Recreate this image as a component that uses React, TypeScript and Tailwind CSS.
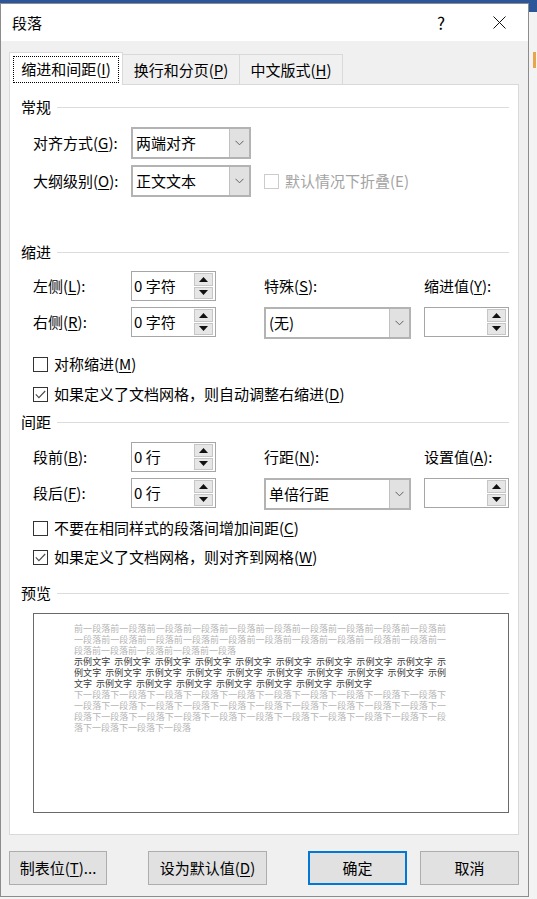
import React from "react"

function U({ children }: { children: React.ReactNode }) {
  return <span className="underline underline-offset-[2px] decoration-[1px]">{children}</span>
}

function SectionHead({ title }: { title: string }) {
  return (
    <div className="flex h-[20px] items-center">
      <span className="leading-[20px]">{title}</span>
      <div className="ml-[6px] h-px flex-1 bg-[#dcdcdc]" />
    </div>
  )
}

function Chevron() {
  return (
    <svg width="9" height="6" viewBox="0 0 9 6">
      <polyline points="0.5,0.8 4.5,4.8 8.5,0.8" fill="none" stroke="#606060" strokeWidth="1" />
    </svg>
  )
}

function Combo({ value, w }: { value: string; w: string }) {
  return (
    <div className={`flex h-[32px] ${w} border-2 border-[#b3b3b3] bg-white`}>
      <div className="flex flex-1 items-center pl-[3px] leading-[20px]">{value}</div>
      <div className="flex w-[20px] items-center justify-center border-l border-[#c0c0c0] bg-[#e1e1e1]">
        <Chevron />
      </div>
    </div>
  )
}

function Arrow({ up }: { up?: boolean }) {
  return (
    <svg width="9" height="5" viewBox="0 0 9 5">
      <polygon points={up ? "0,5 4.5,0 9,5" : "0,0 4.5,5 9,0"} fill="#111" />
    </svg>
  )
}

function Spin({ value }: { value: string }) {
  return (
    <div className="flex h-[30px] w-[85px] border border-[#a6a6a6] bg-white">
      <div className="flex flex-1 items-center pl-[2px] leading-[20px]">{value}</div>
      <div className="flex w-[21px] flex-col gap-px py-[1px] pr-[2px]">
        <div className="flex flex-1 items-center justify-center border border-[#c6c6c6] bg-[#e6e6e6]">
          <Arrow up />
        </div>
        <div className="flex flex-1 items-center justify-center border border-[#c6c6c6] bg-[#e6e6e6]">
          <Arrow />
        </div>
      </div>
    </div>
  )
}

function Check({ checked, disabled, children }: { checked?: boolean; disabled?: boolean; children: React.ReactNode }) {
  return (
    <div className="flex h-[20px] items-center">
      <div
        className={`flex h-[15px] w-[15px] items-center justify-center border bg-white ${
          disabled ? "border-[#cccccc]" : "border-[#333333]"
        }`}
      >
        {checked && (
          <svg width="11" height="9" viewBox="0 0 11 9">
            <polyline points="0.8,4.4 3.9,7.6 10.2,1" fill="none" stroke="#4a4a4a" strokeWidth="1.1" />
          </svg>
        )}
      </div>
      <span className={`ml-[6px] leading-[20px] ${disabled ? "text-[#a3a3a3]" : ""}`}>{children}</span>
    </div>
  )
}

function Label({ children }: { children: React.ReactNode }) {
  return <div className="flex w-[98px] items-center leading-[20px]">{children}</div>
}

function Btn({ children, primary, w }: { children: React.ReactNode; primary?: boolean; w: string }) {
  return (
    <div
      className={`flex h-[34px] ${w} items-center justify-center bg-[#e1e1e1] leading-[20px] ${
        primary ? "border-2 border-[#0078d7]" : "border border-[#adadad]"
      }`}
    >
      {children}
    </div>
  )
}

const before = ["前一段落".repeat(10) + "前", "一段落前".repeat(10) + "一", "段落前一".repeat(4) + "段落"]
const sample = ["示例文字 ".repeat(9) + "示", "例文字" + " 示例文字".repeat(8) + " 示例", "文字" + " 示例文字".repeat(7)]
const after = [
  "下一段落".repeat(10) + "下",
  "一段落下".repeat(10) + "一",
  "段落下一".repeat(10) + "段",
  "落下一段".repeat(3) + "落",
]

function PreviewLine({ text, full, dark }: { text: string; full?: boolean; dark?: boolean }) {
  return (
    <div
      className={`h-[11px] w-[372px] whitespace-pre leading-[11px] ${dark ? "text-[#3a3a3a] [word-spacing:2px]" : "text-[#b5b5b5]"} ${
        full ? "text-justify [text-align-last:justify]" : ""
      }`}
    >
      {text}
    </div>
  )
}

export default function App() {
  return (
    <div className="flex h-[899px] w-[537px] flex-col overflow-hidden bg-[#f3f3f3] font-['Noto_Sans_CJK_SC','Noto_Sans',sans-serif] text-[15px] text-black">
      <div className="h-[3px] w-full shrink-0 bg-[#2b579a]" />
      <div className="flex flex-1">
        {/* 对话框 */}
        <div className="flex h-[894px] w-[529px] shrink-0 flex-col border border-[#8c8c8c] bg-[#f0f0f0]">
          <div className="flex h-[37px] items-center bg-white pl-[11px]">
            <span className="leading-[20px]">段落</span>
            <div className="ml-auto flex pr-[6px]">
              <div className="flex w-[46px] justify-center text-[17px] leading-[20px]">?</div>
              <div className="ml-[12px] flex w-[46px] items-center justify-center">
                <svg width="13" height="13" viewBox="0 0 13 13">
                  <path d="M0.5 0.5 L12.5 12.5 M12.5 0.5 L0.5 12.5" stroke="#111" strokeWidth="1" />
                </svg>
              </div>
            </div>
          </div>

          <div className="flex flex-col pl-[8px] pr-[9px]">
            {/* 选项卡 */}
            <div className="mt-[11px] flex h-[32px] items-end">
              <div className="relative z-10 -mb-px flex h-[33px] w-[114px] items-center justify-center border border-b-0 border-[#d9d9d9] bg-white">
                <div className="flex h-[27px] w-[106px] items-center justify-center border border-dotted border-black leading-[20px]">
                  缩进和间距(<U>I</U>)
                </div>
              </div>
              <div className="flex h-[30px] w-[117px] items-center justify-center border-t border-r border-[#d9d9d9] leading-[20px]">
                换行和分页(<U>P</U>)
              </div>
              <div className="flex h-[30px] w-[103px] items-center justify-center border-t border-r border-[#d9d9d9] leading-[20px]">
                中文版式(<U>H</U>)
              </div>
            </div>

            {/* 选项卡页面 */}
            <div className="flex h-[751px] w-[510px] flex-col border border-[#d9d9d9] bg-white pl-[11px] pr-[9px]">
              <div className="mt-[12px]">
                <SectionHead title="常规" />
              </div>
              <div className="mt-[10px] flex pl-[12px]">
                <Label>
                  对齐方式(<U>G</U>):
                </Label>
                <Combo value="两端对齐" w="w-[120px]" />
              </div>
              <div className="mt-[6px] flex pl-[12px]">
                <Label>
                  大纲级别(<U>O</U>):
                </Label>
                <Combo value="正文文本" w="w-[120px]" />
                <div className="ml-[13px] flex items-center">
                  <Check disabled>默认情况下折叠(E)</Check>
                </div>
              </div>

              <div className="mt-[45px]">
                <SectionHead title="缩进" />
              </div>
              <div className="mt-[9px] flex h-[30px] pl-[12px]">
                <Label>
                  左侧(<U>L</U>):
                </Label>
                <Spin value="0 字符" />
                <div className="ml-[48px] flex w-[147px] items-center leading-[20px]">
                  特殊(<U>S</U>):
                </div>
                <div className="ml-[13px] flex w-[85px] items-center leading-[20px]">
                  缩进值(<U>Y</U>):
                </div>
              </div>
              <div className="mt-[6px] flex items-start pl-[12px]">
                <div className="flex h-[30px]">
                  <Label>
                    右侧(<U>R</U>):
                  </Label>
                </div>
                <Spin value="0 字符" />
                <div className="ml-[48px]">
                  <Combo value="(无)" w="w-[147px]" />
                </div>
                <div className="ml-[13px]">
                  <Spin value="" />
                </div>
              </div>
              <div className="mt-[15px] pl-[12px]">
                <Check>
                  对称缩进(<U>M</U>)
                </Check>
              </div>
              <div className="mt-[10px] pl-[12px]">
                <Check checked>
                  如果定义了文档网格，则自动调整右缩进(<U>D</U>)
                </Check>
              </div>

              <div className="mt-[8px]">
                <SectionHead title="间距" />
              </div>
              <div className="mt-[10px] flex h-[30px] pl-[12px]">
                <Label>
                  段前(<U>B</U>):
                </Label>
                <Spin value="0 行" />
                <div className="ml-[48px] flex w-[147px] items-center leading-[20px]">
                  行距(<U>N</U>):
                </div>
                <div className="ml-[13px] flex w-[85px] items-center leading-[20px]">
                  设置值(<U>A</U>):
                </div>
              </div>
              <div className="mt-[6px] flex items-start pl-[12px]">
                <div className="flex h-[30px]">
                  <Label>
                    段后(<U>F</U>):
                  </Label>
                </div>
                <Spin value="0 行" />
                <div className="ml-[48px]">
                  <Combo value="单倍行距" w="w-[147px]" />
                </div>
                <div className="ml-[13px]">
                  <Spin value="" />
                </div>
              </div>
              <div className="mt-[8px] pl-[12px]">
                <Check>
                  不要在相同样式的段落间增加间距(<U>C</U>)
                </Check>
              </div>
              <div className="mt-[9px] pl-[12px]">
                <Check checked>
                  如果定义了文档网格，则对齐到网格(<U>W</U>)
                </Check>
              </div>

              <div className="mt-[16px]">
                <SectionHead title="预览" />
              </div>
              <div className="ml-[12px] mt-[10px] h-[200px] w-[476px] border border-[#6a6a6a] bg-white pl-[40px] pt-[9px] text-[9px]">
                {before.map((t, i) => (
                  <PreviewLine key={"b" + i} text={t} full={i < 2} />
                ))}
                {sample.map((t, i) => (
                  <PreviewLine key={"s" + i} text={t} full={i < 2} dark />
                ))}
                {after.map((t, i) => (
                  <PreviewLine key={"a" + i} text={t} full={i < 3} />
                ))}
              </div>
            </div>

            {/* 按钮 */}
            <div className="mt-[16px] flex">
              <Btn w="w-[99px]">
                制表位(<U>T</U>)...
              </Btn>
              <div className="ml-[41px]">
                <Btn w="w-[119px]">
                  设为默认值(<U>D</U>)
                </Btn>
              </div>
              <div className="ml-[41px]">
                <Btn w="w-[99px]" primary>
                  确定
                </Btn>
              </div>
              <div className="ml-[13px]">
                <Btn w="w-[99px]">取消</Btn>
              </div>
            </div>
          </div>
        </div>

        {/* 背景窗口 */}
        <div className="flex flex-1 flex-col">
          <div className="h-[9px] bg-[#2b579a]" />
          <div className="mt-[40px] ml-[4px] h-[16px] w-[3px] bg-[#e8a54a]" />
        </div>
      </div>
    </div>
  )
}
